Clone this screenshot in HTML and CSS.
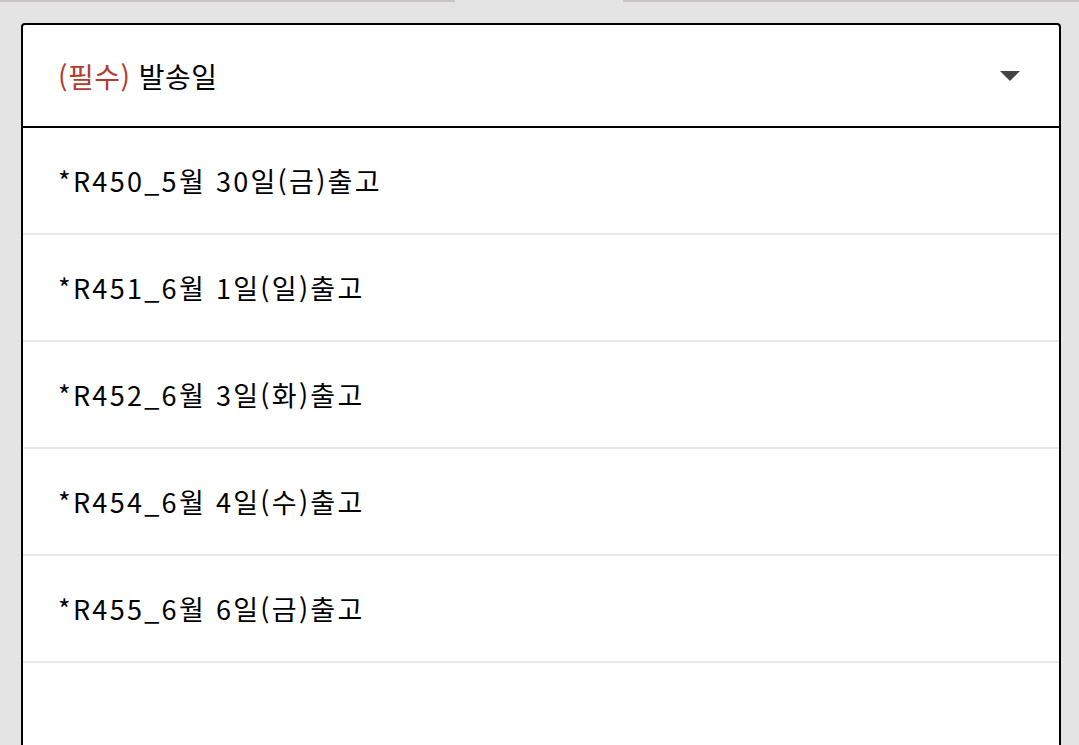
FILE: index.html
```html
<!DOCTYPE html>
<html lang="ko">
<head>
<meta charset="utf-8">
<link rel="stylesheet" href="styles.css">
</head>
<body>
<div class="topstrip">
  <span class="seg seg-a"></span>
  <span class="seg seg-b"></span>
</div>
<div class="page">
  <div class="card">
    <div class="header">
      <span class="label"><span class="req">(필수)</span> 발송일</span>
      <svg class="caret" width="20" height="10" viewBox="0 0 20 10"><path d="M0 0 H20 L10 10 Z" fill="#444"/></svg>
    </div>
    <ul class="list">
      <li class="item">*R450_5월 30일(금)출고</li>
      <li class="item">*R451_6월 1일(일)출고</li>
      <li class="item">*R452_6월 3일(화)출고</li>
      <li class="item">*R454_6월 4일(수)출고</li>
      <li class="item">*R455_6월 6일(금)출고</li>
    </ul>
    <div class="filler"></div>
  </div>
</div>
</body>
</html>
```

FILE: styles.css
```css
html, body {
  margin: 0;
  padding: 0;
  background: #e4e4e4;
  overflow: hidden;
  height: 745px;
}
body {
  font-family: "Noto Sans CJK KR", "Noto Sans", sans-serif;
  color: #111;
}
.topstrip {
  display: flex;
  height: 2px;
}
.seg {
  display: block;
  height: 2px;
  background: #c9c5c6;
}
.seg-a { width: 455px; }
.seg-b { width: 456px; margin-left: 168px; }
.page {
  padding: 21px 0 0 21px;
}
.card {
  box-sizing: border-box;
  width: 1040px;
  background: #fff;
  border: 2px solid #000;
  border-radius: 4px;
}
.header {
  height: 101px;
  display: flex;
  align-items: center;
  justify-content: space-between;
  padding: 0 39px 0 35px;
  border-bottom: 2px solid #000;
}
.label {
  font-size: 28px;
  letter-spacing: 0.5px;
  color: #000;
}
.req {
  color: #b43a30;
}
.caret {
  display: block;
}
.list {
  list-style: none;
  margin: 0;
  padding: 0;
}
.item {
  height: 105px;
  display: flex;
  align-items: center;
  padding-left: 35px;
  border-bottom: 2px solid #e8e8e8;
  font-size: 27px;
  letter-spacing: 2.3px;
  color: #000;
}
.filler {
  height: 200px;
}
```
